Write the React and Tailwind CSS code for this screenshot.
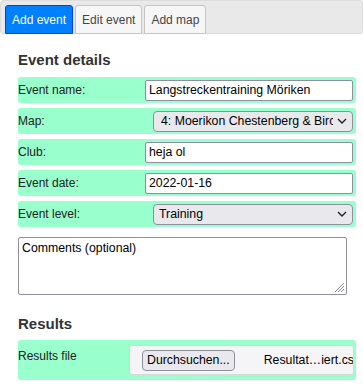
import React from "react";

function Row({ label, children, className = "" }) {
  return (
    <div className={`flex items-center justify-between h-[26px] rounded-[3px] bg-[#99ffcc] pr-[3px] ${className}`}>
      <span className="text-[12px] text-[#222]">{label}</span>
      {children}
    </div>
  );
}

function Chevron() {
  return (
    <svg width="10" height="6" viewBox="0 0 10 6" className="shrink-0">
      <path d="M1 1 L5 5 L9 1" fill="none" stroke="#222" strokeWidth="1.4" />
    </svg>
  );
}

export default function App() {
  return (
    <div className="w-[363px] h-[388px] bg-white font-['Liberation_Sans',Arial,sans-serif] text-[#222] overflow-hidden">
      <div className="h-[34px] border border-[#dddddd] bg-[#e9e9e9] rounded-[3px] flex items-end pl-[4px] gap-[2px]">
        <div className="h-[29px] mb-[-1px] px-[6px] flex items-center rounded-t-[3px] border border-[#003eff] bg-[#007fff] text-white text-[12px]">Add event</div>
        <div className="h-[29px] mb-[-1px] px-[6px] flex items-center rounded-t-[3px] border border-[#c5c5c5] bg-[#f6f6f6] text-[#454545] text-[12px]">Edit event</div>
        <div className="h-[29px] mb-[-1px] px-[6px] flex items-center rounded-t-[3px] border border-[#c5c5c5] bg-[#f6f6f6] text-[#454545] text-[12px]">Add map</div>
      </div>
      <div className="pl-[18px] pr-[7px]">
        <h2 className="mt-[17px] mb-[8px] text-[15px] leading-[18px] font-bold text-[#333]">Event details</h2>
        <div className="flex flex-col gap-[5px]">
          <Row label="Event name:">
            <div className="w-[208px] h-[21px] border border-[#8f8f9d] rounded-[2px] bg-white flex items-center pl-[3px] text-[12.3px] text-black">Langstreckentraining Möriken</div>
          </Row>
          <Row label="Map:">
            <div className="w-[200px] h-[21px] border border-[#8f8f9d] rounded-[4px] bg-[#e9e9ed] flex items-center pl-[7px] pr-[5px] text-[12.3px] text-black">
              <span className="flex-1 overflow-hidden whitespace-nowrap">4: Moerikon Chestenberg &amp; Birch</span>
              <span className="pl-[4px]"><Chevron /></span>
            </div>
          </Row>
          <Row label="Club:">
            <div className="w-[208px] h-[21px] border border-[#8f8f9d] rounded-[2px] bg-white flex items-center pl-[3px] text-[12.3px] text-black">heja ol</div>
          </Row>
          <Row label="Event date:">
            <div className="w-[208px] h-[21px] border border-[#8f8f9d] rounded-[2px] bg-white flex items-center pl-[3px] text-[12.3px] text-black">2022-01-16</div>
          </Row>
          <Row label="Event level:">
            <div className="w-[200px] h-[21px] border border-[#8f8f9d] rounded-[4px] bg-[#e9e9ed] flex items-center pl-[5px] pr-[5px] text-[12.3px] text-black">
              <span className="flex-1">Training</span>
              <Chevron />
            </div>
          </Row>
        </div>
        <div className="relative mt-[10px] w-[329px] h-[58px] border border-[#8f8f9d] rounded-[2px] bg-white pl-[3px] pt-[3px] text-[12.3px] leading-[15px] text-black">
          Comments (optional)
          <svg width="11" height="11" viewBox="0 0 11 11" className="absolute right-[1px] bottom-[1px]">
            <path d="M10 1 L1 10 M10 4 L4 10 M10 7 L7 10" stroke="#888" strokeWidth="1" />
          </svg>
        </div>
        <h2 className="mt-[20px] mb-[7px] text-[15px] leading-[18px] font-bold text-[#333]">Results</h2>
        <div className="flex items-start justify-between h-[40px] rounded-[3px] bg-[#99ffcc] pr-[2px]">
          <span className="text-[12px] mt-[7px] text-[#222]">Results file</span>
          <div className="mt-[5px] w-[225px] h-[30px] border border-[#d8d8d8] rounded-[3px] bg-[#f5f5f7] flex items-center pl-[12px] overflow-hidden whitespace-nowrap text-[12.3px] text-black">
            <div className="h-[21px] px-[4px] border border-[#8f8f9d] rounded-[4px] bg-[#e9e9ed] flex items-center">Durchsuchen...</div>
            <span className="ml-[29px]">Resultat…iert.csv</span>
          </div>
        </div>
      </div>
    </div>
  );
}
